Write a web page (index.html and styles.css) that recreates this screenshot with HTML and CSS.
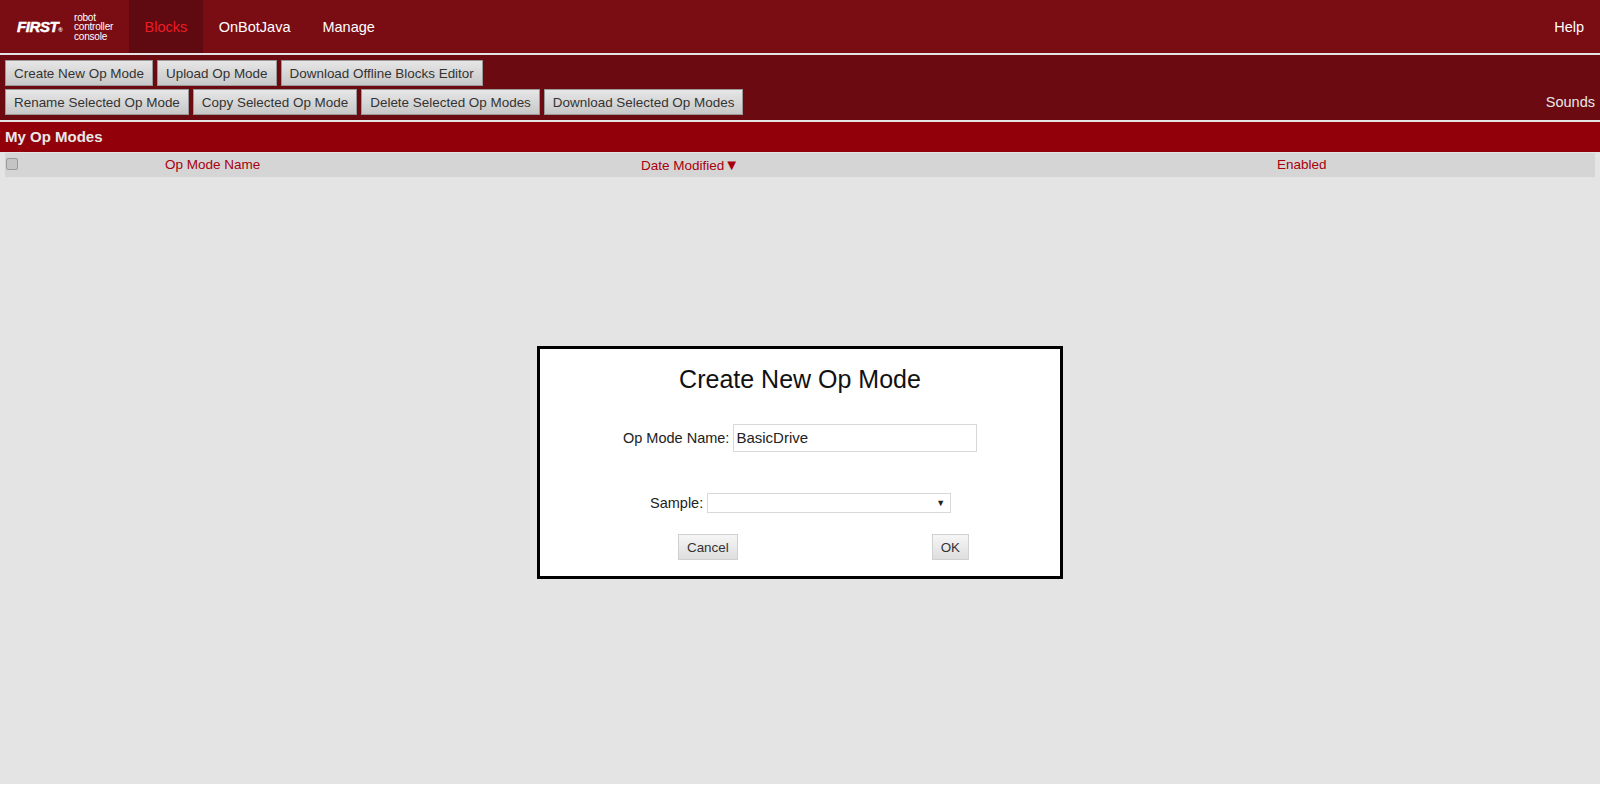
FILE: index.html
```html
<!DOCTYPE html>
<html lang="en">
<head>
  <meta charset="UTF-8">
  <title>Robot Controller Console</title>
  <link rel="stylesheet" href="styles.css">
</head>
<body>

<div id="pagina">
  <div id="cabecalho">
    <div class="logo">
      <span class="logoFirst">FIRST<span class="logoMarca">®</span></span>
      <span class="logoTexto">robot<br>controller<br>console</span>
    </div>
    <a class="aba ativa">Blocks</a>
    <a class="aba">OnBotJava</a>
    <a class="aba">Manage</a>
    <a class="ajuda">Help</a>
  </div>

  <div id="ferramentas">
    <div class="linhaBotoes">
      <button class="botao">Create New Op Mode</button>
      <button class="botao">Upload Op Mode</button>
      <button class="botao">Download Offline Blocks Editor</button>
    </div>
    <div class="linhaBotoes">
      <button class="botao">Rename Selected Op Mode</button>
      <button class="botao">Copy Selected Op Mode</button>
      <button class="botao">Delete Selected Op Modes</button>
      <button class="botao">Download Selected Op Modes</button>
      <span class="sons">Sounds</span>
    </div>
  </div>

  <div id="titulo">My Op Modes</div>

  <div id="conteudo">
    <div class="tabelaTopo">
      <span class="caixa"></span>
      <span>Op Mode Name</span>
      <span>Date Modified<span class="seta">▼</span></span>
      <span>Enabled</span>
    </div>
  </div>
</div>

<div id="fundoDialogo">
  <div class="dialogo">
    <h1>Create New Op Mode</h1>
    <div class="campoNome">
      <label>Op Mode Name:</label>
      <div class="entrada">BasicDrive</div>
    </div>
    <div class="campoAmostra">
      <label>Sample:</label>
      <div class="selecao"><span class="selecaoSeta">▼</span></div>
    </div>
    <div class="acoes">
      <button class="botaoDialogo">Cancel</button>
      <button class="botaoDialogo">OK</button>
    </div>
  </div>
</div>

</body>
</html>
```

FILE: styles.css
```css
html, body {
  margin: 0;
  height: 785px;
  overflow: hidden;
  background: #fff;
  font-family: "Liberation Sans", Arial, sans-serif;
}

#pagina {
  height: 784px;
  background: #e4e4e4;
}

#cabecalho {
  display: flex;
  align-items: stretch;
  height: 53px;
  background: #7a0c13;
  color: #fff;
  font-size: 14.5px;
  border-bottom: 2px solid #e4e4e4;
}

.logo {
  display: flex;
  align-items: center;
  width: 129px;
  padding-left: 17px;
  box-sizing: border-box;
}

.logoFirst {
  width: 57px;
  font-size: 15px;
  font-weight: bold;
  font-style: italic;
  letter-spacing: -0.4px;
  -webkit-text-stroke: 0.5px #fff;
}

.logoMarca {
  font-size: 6px;
  font-style: normal;
  -webkit-text-stroke: 0;
}

.logoTexto {
  padding-top: 1px;
  font-size: 10px;
  line-height: 9.5px;
  letter-spacing: -0.2px;
}

.aba {
  display: flex;
  align-items: center;
  padding: 0 15px;
  margin-right: 2px;
}

.aba.ativa {
  padding: 0 15.5px;
  background: #5f0910;
  color: #ee1c25;
  margin-right: 1px;
}

.ajuda {
  align-self: center;
  margin-left: auto;
  margin-right: 16px;
}

#ferramentas {
  display: flex;
  flex-direction: column;
  gap: 3px;
  height: 65px;
  box-sizing: border-box;
  padding: 5px 5px 0;
  background: #6b0a11;
}

.linhaBotoes {
  display: flex;
  align-items: center;
  gap: 4px;
}

.botao {
  height: 26px;
  padding: 0 8px;
  font-family: inherit;
  font-size: 13.45px;
  color: #333;
  background: linear-gradient(#e6e6e6, #c8c8c8);
  border: 1px solid #999;
  border-radius: 0;
}

.sons {
  margin-left: auto;
  font-size: 14.5px;
  color: #e8e8e8;
}

#titulo {
  height: 30px;
  line-height: 30px;
  padding-left: 5px;
  margin-top: 2px;
  margin-bottom: 1px;
  background: #92000a;
  color: #e8e8e8;
  font-size: 15px;
  font-weight: bold;
}

#conteudo {
  padding: 0 5px;
}

.tabelaTopo {
  display: grid;
  grid-template-columns: 160px 476px 636px 1fr;
  align-items: center;
  height: 24px;
  box-sizing: border-box;
  padding-bottom: 1px;
  background: #d5d5d5;
  color: #a8000c;
  font-size: 13.5px;
}

.caixa {
  width: 12px;
  height: 12px;
  box-sizing: border-box;
  margin: 0 0 2px 1px;
  background: #c4c4c4;
  border: 1px solid #9a9a9a;
  border-radius: 2px;
}

.seta {
  font-size: 15px;
  line-height: 1;
}

#fundoDialogo {
  position: absolute;
  top: 346px;
  left: 0;
  right: 0;
  display: flex;
  justify-content: center;
}

.dialogo {
  width: 526px;
  height: 233px;
  box-sizing: border-box;
  background: #fff;
  border: 3px solid #000;
  color: #222;
  font-size: 14px;
}

.dialogo h1 {
  margin: 15px 0 0;
  font-size: 25px;
  font-weight: normal;
  line-height: 30px;
  text-align: center;
  color: #111;
}

.campoNome,
.campoAmostra {
  display: flex;
  align-items: center;
  gap: 4px;
}

.campoNome {
  margin: 30px 0 0 83px;
}

.campoAmostra {
  margin: 41px 0 0 110px;
}

.dialogo label {
  font-size: 14.5px;
}

.entrada {
  width: 244px;
  height: 28px;
  box-sizing: border-box;
  padding-left: 2px;
  line-height: 26px;
  border: 1px solid #d8d8d8;
  font-size: 15px;
}

.selecao {
  display: flex;
  justify-content: flex-end;
  align-items: center;
  width: 244px;
  height: 20px;
  box-sizing: border-box;
  padding-right: 5px;
  border: 1px solid #d8d8d8;
}

.selecaoSeta {
  font-size: 9px;
  color: #222;
}

.acoes {
  display: flex;
  justify-content: space-between;
  width: 291px;
  margin: 21px 0 0 138px;
}

.botaoDialogo {
  height: 26px;
  padding: 0 8px;
  font-family: inherit;
  font-size: 13.4px;
  color: #333;
  background: linear-gradient(#f6f6f6, #dedede);
  border: 1px solid #d0d0d0;
  border-radius: 0;
}
```
